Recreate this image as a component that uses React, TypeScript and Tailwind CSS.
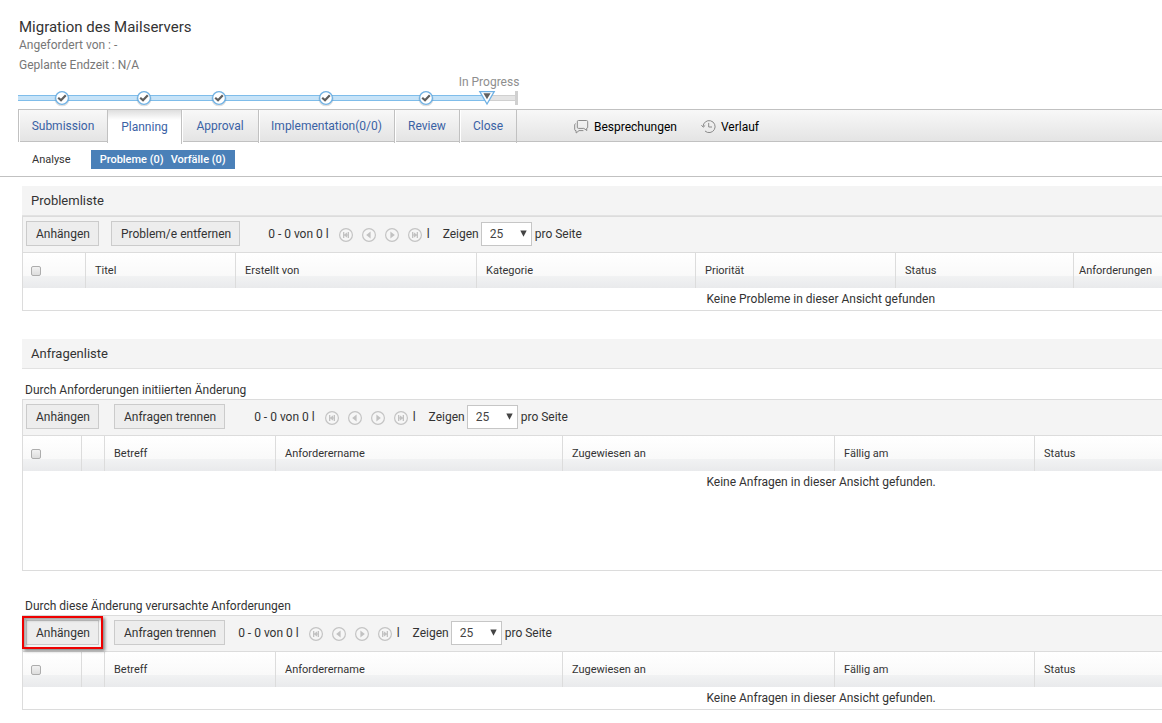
import React from "react";

type Column = { label: string; width: string; pad?: string };

const steps = [
  { label: "Submission", done: true },
  { label: "Planning", done: true, active: true },
  { label: "Approval", done: true },
  { label: "Implementation(0/0)", done: true },
  { label: "Review", done: true },
  { label: "Close", done: false },
];

const problemColumns: Column[] = [
  { label: "Titel", width: "w-[150px]" },
  { label: "Erstellt von", width: "w-[241px]" },
  { label: "Kategorie", width: "w-[219px]" },
  { label: "Priorität", width: "w-[200px]" },
  { label: "Status", width: "w-[178px]" },
  { label: "Anforderungen", width: "", pad: "pl-[5px]" },
];

const requestColumns: Column[] = [
  { label: "", width: "w-[23px]" },
  { label: "Betreff", width: "w-[171px]" },
  { label: "Anforderername", width: "w-[287px]" },
  { label: "Zugewiesen an", width: "w-[272px]" },
  { label: "Fällig am", width: "w-[200px]" },
  { label: "Status", width: "" },
];

function CheckMark() {
  return (
    <svg width="18" height="18" viewBox="0 0 18 18" aria-hidden="true">
      <circle cx="9" cy="9.8" r="6.8" fill="none" stroke="#000" strokeOpacity="0.12" strokeWidth="1.5" />
      <circle cx="9" cy="9" r="6.4" fill="#fff" stroke="#6fb1e4" strokeWidth="1.3" />
      <path d="M5.2 8.8 L8 11.3 L12.8 6.2" fill="none" stroke="#5f5f5f" strokeWidth="2.2" />
    </svg>
  );
}

function CurrentMark() {
  return (
    <svg width="18" height="18" viewBox="0 0 18 18" aria-hidden="true">
      <path d="M1.8 2.6 H16.2 L9 15 Z" fill="#fff" stroke="#6fb1e4" strokeWidth="1.3" />
      <path d="M5.4 4.2 H12.6 L9 10.2 Z" fill="#606060" />
    </svg>
  );
}

function ChatIcon() {
  return (
    <svg width="15" height="15" viewBox="0 0 15 15" fill="none" stroke="#8a8a8a" strokeWidth="1" aria-hidden="true">
      <path d="M4.5 1.5 H12.5 Q13.7 1.5 13.7 2.7 V8.2 Q13.7 9.4 12.5 9.4 L12.9 11.5 L9.8 9.4 H4.5 Q3.3 9.4 3.3 8.2 V2.7 Q3.3 1.5 4.5 1.5 Z" />
      <path d="M1.6 4.6 Q0.7 5 0.7 6 V10.6 Q0.7 11.6 2 11.6 L2.2 14 L5 11.6 H9.4" />
    </svg>
  );
}

function HistoryIcon() {
  return (
    <svg width="15" height="15" viewBox="0 0 15 15" fill="none" stroke="#8a8a8a" strokeWidth="1" aria-hidden="true">
      <path d="M2.1 7.6 A6 6 0 1 1 4 12" />
      <path d="M0.4 6.2 L2.2 8.2 L4.2 6.4" />
      <path d="M7.7 3.9 V8 H11" />
    </svg>
  );
}

const pagerPaths = {
  Erste: "M4 4 H5.3 V6.6 L8.2 4.2 V6.4 H8.8 V4 H10 V10 H8.8 V7.6 H8.2 V9.8 L5.3 7.4 V10 H4 Z",
  Zurück: "M4.2 7 L8.6 3.6 V10.4 Z",
  Weiter: "M9.8 7 L5.4 3.6 V10.4 Z",
  Letzte: "M10 4 H8.7 V6.6 L5.8 4.2 V6.4 H5.2 V4 H4 V10 H5.2 V7.6 H5.8 V9.8 L8.7 7.4 V10 H10 Z",
};

function PagerButton({ name }: { name: keyof typeof pagerPaths }) {
  return (
    <button type="button" aria-label={name} className="size-[14px]">
      <svg width="14" height="14" viewBox="0 0 14 14" aria-hidden="true">
        <circle cx="7" cy="7" r="6.4" fill="#f6f6f6" stroke="#c4c4c4" strokeWidth="1.2" />
        <path d={pagerPaths[name]} fill="#c2c2c2" />
      </svg>
    </button>
  );
}

function ToolButton({ children }: { children: React.ReactNode }) {
  return (
    <button type="button" className="h-[25px] border border-[#cbcbcb] bg-[#ededed] pr-2 pl-[9px] leading-[22px] text-[#333]">
      {children}
    </button>
  );
}

type ListProps = {
  id: string;
  remove: string;
  buttonGap: string;
  pagerGap: string;
  columns: Column[];
  selectWidth: string;
  message: string;
  bodyHeight: string;
  highlighted?: boolean;
};

function List({ id, remove, buttonGap, pagerGap, columns, selectWidth, message, bodyHeight, highlighted }: ListProps) {
  return (
    <div className="border-y border-l border-[#dcdcdc]">
      <div className="flex h-[35px] items-start bg-[#f4f4f4] pt-1 pl-[3px]">
        <div className={`flex ${buttonGap}`}>
          <div className="relative flex">
            <ToolButton>Anhängen</ToolButton>
            {highlighted && (
              <span className="pointer-events-none absolute -inset-x-1 -inset-y-1 border-2 border-[#ee0000] shadow-[2px_2px_3px_rgba(0,0,0,0.45),inset_2px_2px_3px_rgba(0,0,0,0.35)]" />
            )}
          </div>
          <ToolButton>{remove}</ToolButton>
        </div>
        <div className={`flex h-[26px] items-center ${pagerGap}`}>
          <span>0 - 0 von 0 l</span>
          <span className="flex gap-[9px] pt-[2px] pl-[10px]">
            <PagerButton name="Erste" />
            <PagerButton name="Zurück" />
            <PagerButton name="Weiter" />
            <PagerButton name="Letzte" />
          </span>
          <span className="pl-[5px]">l</span>
          <label htmlFor={id} className="pl-[13px]">
            Zeigen
          </label>
          <span className="relative ml-[2px] flex">
            <select id={id} defaultValue="25" className="h-6 w-[51px] appearance-none border border-[#c6c6c6] bg-white pl-2 text-[#444]">
              <option>25</option>
              <option>50</option>
              <option>100</option>
            </select>
            <svg className="pointer-events-none absolute top-[8px] right-[5px]" width="7" height="7" viewBox="0 0 7 7" aria-hidden="true">
              <path d="M0.3 0.5 H6.7 L3.5 6.8 Z" fill="#444" />
            </svg>
          </span>
          <span className="pl-[3px]">pro Seite</span>
        </div>
      </div>
      <table className="w-full table-fixed border-separate border-spacing-0">
        <thead>
          <tr className="h-9">
            <th className={`${selectWidth} border-t border-[#dcdcdc] bg-linear-[to_bottom,#ffffff_0%,#f9f9f9_66%,#f1f2f3_67%,#e9eaec_100%] pl-2 text-left`}>
              <input
                type="checkbox"
                aria-label="Alle auswählen"
                className="block size-[10px] appearance-none rounded-[2px] border border-[#adadad] bg-linear-to-b from-[#f2f2f2] to-[#dddddd]"
              />
            </th>
            {columns.map((c, i) => (
              <th
                key={i}
                className={`${c.width} ${c.pad ?? "pl-[9px]"} border-t border-l border-[#dcdcdc] bg-linear-[to_bottom,#ffffff_0%,#f9f9f9_66%,#f1f2f3_67%,#e9eaec_100%] text-left text-[11px] font-normal whitespace-nowrap text-[#333]`}
              >
                {c.label}
              </th>
            ))}
          </tr>
        </thead>
        <tbody>
          <tr className={bodyHeight}>
            <td colSpan={columns.length + 1} className="align-top">
              <div className="pl-[60%] leading-[22px]">{message}</div>
            </td>
          </tr>
        </tbody>
      </table>
    </div>
  );
}

export default function App() {
  return (
    <div className="min-h-screen overflow-hidden bg-white pb-3 font-['Roboto',sans-serif] text-[12px] leading-4 text-[#333]">
      <header className="pt-[17px] pl-[19px]">
        <h1 className="text-[15px] leading-5">Migration des Mailservers</h1>
        <p className="leading-4 text-[#777]">Angefordert von : -</p>
        <p className="pt-1 leading-4 text-[#777]">Geplante Endzeit : N/A</p>
      </header>

      <div className="pl-[18px]">
        <div className="grid w-max grid-cols-[88px_76px_74px_140px_60px_62px]">
          <span className="col-start-6 flex h-4 justify-center pl-1 leading-[18px] whitespace-nowrap text-[#8e8e8e]">In Progress</span>
          {steps.map((s, i) => (
            <span key={s.label} className="relative row-start-2 flex h-[18px] items-center justify-center">
              <span className="absolute inset-x-0 h-[6px] border-y border-[#7fbdea] bg-[#c6e3f8]" />
              {i === steps.length - 1 && (
                <>
                  <span className="absolute right-0 h-[6px] w-[28px] border-y border-[#d0d0d0] bg-[#e4e4e4]" />
                  <span className="absolute right-0 h-[14px] w-[3px] bg-[#d0d0d0]" />
                </>
              )}
              <span className="relative">{s.done ? <CheckMark /> : <CurrentMark />}</span>
            </span>
          ))}
        </div>
        <nav className="mt-[2px] flex h-[33px] border-y border-l border-[#c1c1c1] bg-linear-to-b from-[#f8f8f8] to-[#e4e4e4]">
          <div className="-mb-px grid grid-cols-[89px_74px_77px_136px_65px_57px] text-center text-[#3a62a5]">
            {steps.map((s) => (
              <a
                key={s.label}
                href="#"
                className={
                  s.active
                    ? "border-r border-[#c1c1c1] bg-linear-[to_bottom,#dedede_0,#ffffff_10px] leading-[34px]"
                    : "mb-px border-r border-[#c1c1c1] leading-8 shadow-[inset_1px_0_0_#ffffff]"
                }
              >
                {s.label}
              </a>
            ))}
          </div>
          <a href="#" className="flex items-center gap-[5px] pt-[2px] pl-[57px] text-black">
            <ChatIcon />
            Besprechungen
          </a>
          <a href="#" className="flex items-center gap-[5px] pt-[2px] pl-6 text-black">
            <HistoryIcon />
            Verlauf
          </a>
        </nav>
      </div>

      <div className="flex h-[35px] items-center border-b border-[#c1c1c1] pl-8 text-[11px]">
        <a href="#" className="pt-[2px] text-[#333]">
          Analyse
        </a>
        <span className="ml-5 flex h-[19px] items-center gap-[7px] bg-[#4a80b8] px-[9px] pt-[1px] font-medium text-white">
          <a href="#">Probleme (0)</a>
          <a href="#">Vorfälle (0)</a>
        </span>
      </div>

      <main className="pl-[22px]">
        <h2 className="mt-[9px] h-[30px] border-b border-[#e2e2e2] bg-[#f4f4f4] pl-[9px] text-[13px] leading-[30px]">Problemliste</h2>
        <List
          id="problems-size"
          remove="Problem/e entfernen"
          buttonGap="gap-3"
          pagerGap="pl-7"
          columns={problemColumns}
          selectWidth="w-[62px]"
          message="Keine Probleme in dieser Ansicht gefunden"
          bodyHeight="h-[22px]"
        />
        <h2 className="mt-7 h-[30px] border-b border-[#e2e2e2] bg-[#f4f4f4] pl-[9px] text-[13px] leading-[30px]">Anfragenliste</h2>
        <h3 className="pt-[13px] pb-[1px] pl-[3px]">Durch Anforderungen initiierten Änderung</h3>
        <List
          id="initiating-size"
          remove="Anfragen trennen"
          buttonGap="gap-[15px]"
          pagerGap="pl-[29px]"
          columns={requestColumns}
          selectWidth="w-[58px]"
          message="Keine Anfragen in dieser Ansicht gefunden."
          bodyHeight="h-[99px]"
        />
        <h3 className="pt-[27px] pb-[1px] pl-[3px]">Durch diese Änderung verursachte Anforderungen</h3>
        <List
          id="caused-size"
          remove="Anfragen trennen"
          buttonGap="gap-[15px]"
          pagerGap="pl-[13px]"
          columns={requestColumns}
          selectWidth="w-[58px]"
          message="Keine Anfragen in dieser Ansicht gefunden."
          bodyHeight="h-[22px]"
          highlighted
        />
      </main>
    </div>
  );
}
